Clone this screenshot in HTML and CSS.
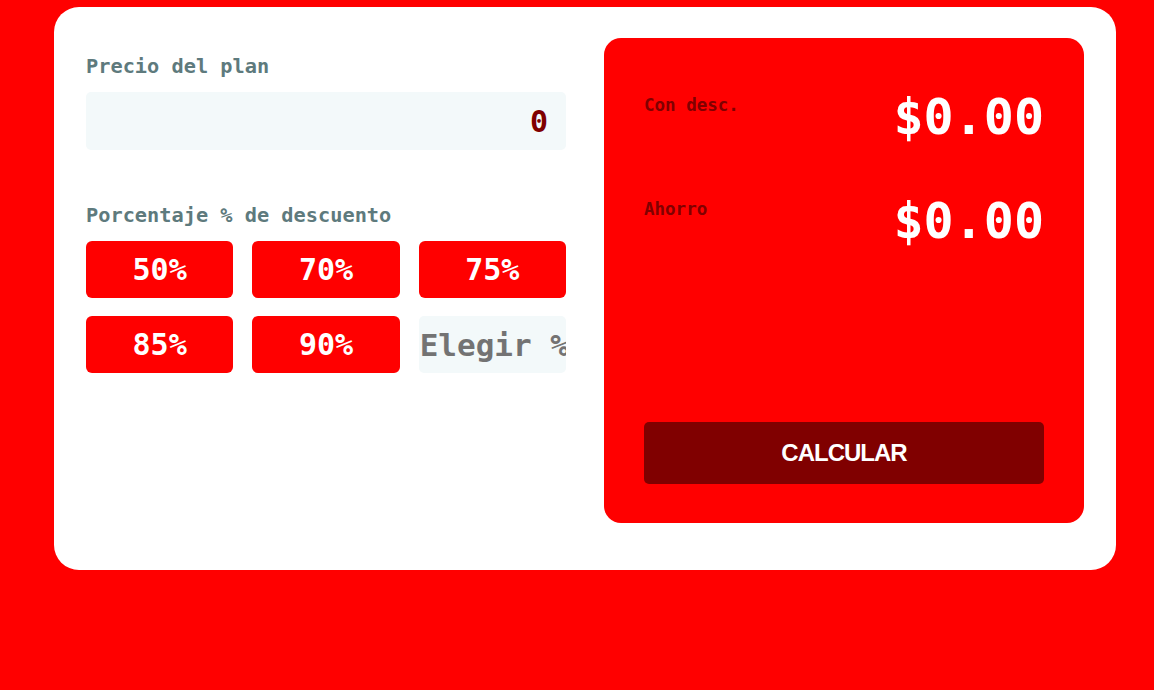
FILE: index.html
```html
<!DOCTYPE html>
<html lang="es">
<head>
<meta charset="utf-8">
<title>Calculadora de descuento</title>
<link rel="stylesheet" href="styles.css">
</head>
<body>
<main class="card">
  <section class="form">
    <label class="label" for="price">Precio del plan</label>
    <input class="field price" id="price" type="text" value="0">
    <p class="label label-pct">Porcentaje % de descuento</p>
    <div class="grid">
      <button class="pct">50%</button>
      <button class="pct">70%</button>
      <button class="pct">75%</button>
      <button class="pct">85%</button>
      <button class="pct">90%</button>
      <input class="field custom" type="text" placeholder="Elegir %">
    </div>
  </section>
  <section class="result">
    <div class="row">
      <span class="r-label">Con desc.</span>
      <span class="amount">$0.00</span>
    </div>
    <div class="row">
      <span class="r-label">Ahorro</span>
      <span class="amount">$0.00</span>
    </div>
    <button class="calc">CALCULAR</button>
  </section>
</main>
</body>
</html>
```
FILE: styles.css
```css
* { box-sizing: border-box; }
html, body { margin: 0; padding: 0; }
body {
  background: #ff0000;
  height: 690px;
  font-family: "DejaVu Sans Mono", "Liberation Mono", monospace;
  font-weight: bold;
}
.card {
  margin: 7px 0 0 54px;
  width: 1062px;
  height: 563px;
  background: #ffffff;
  border-radius: 25px;
  padding: 31px 32px;
  display: flex;
  gap: 38px;
  align-items: flex-start;
}
.form {
  width: 480px;
  display: flex;
  flex-direction: column;
  padding-top: 16px;
}
.label {
  display: block;
  margin: 0;
  font-size: 20.3px;
  line-height: 24px;
  color: #5e7a7d;
}
.field {
  border: none;
  outline: none;
  background: #f3f9fa;
  border-radius: 5px;
  font-family: inherit;
  font-weight: bold;
}
.price {
  margin-top: 14px;
  height: 58px;
  width: 100%;
  text-align: right;
  padding: 0 18px;
  font-size: 30px;
  color: #7f0000;
}
.label-pct { margin-top: 53px; }
.grid {
  margin-top: 14px;
  display: grid;
  grid-template-columns: repeat(3, 1fr);
  column-gap: 19px;
  row-gap: 18px;
}
.pct {
  height: 57px;
  border: none;
  border-radius: 6px;
  background: #ff0000;
  color: #ffffff;
  font-family: inherit;
  font-weight: bold;
  font-size: 30px;
  padding: 0;
}
.custom {
  height: 57px;
  width: 100%;
  min-width: 0;
  padding: 0 0 0 1px;
  font-size: 31px;
  color: #737373;
}
.custom::placeholder { color: #737373; opacity: 1; }
.result {
  width: 480px;
  height: 485px;
  background: #ff0000;
  border-radius: 17px;
  padding: 53px 40px 39px;
  display: flex;
  flex-direction: column;
}
.row {
  display: flex;
  justify-content: space-between;
  align-items: flex-start;
  height: 104px;
}
.r-label {
  font-size: 17.5px;
  line-height: 24px;
  color: #800000;
  margin-top: 2px;
}
.amount {
  font-size: 50px;
  line-height: 52px;
  color: #ffffff;
}
.calc {
  margin-top: auto;
  height: 62px;
  width: 100%;
  border: none;
  border-radius: 5px;
  background: #800000;
  color: #ffffff;
  font-family: "Liberation Sans", Arial, sans-serif;
  font-weight: bold;
  font-size: 24px;
  letter-spacing: -1px;
}
```
